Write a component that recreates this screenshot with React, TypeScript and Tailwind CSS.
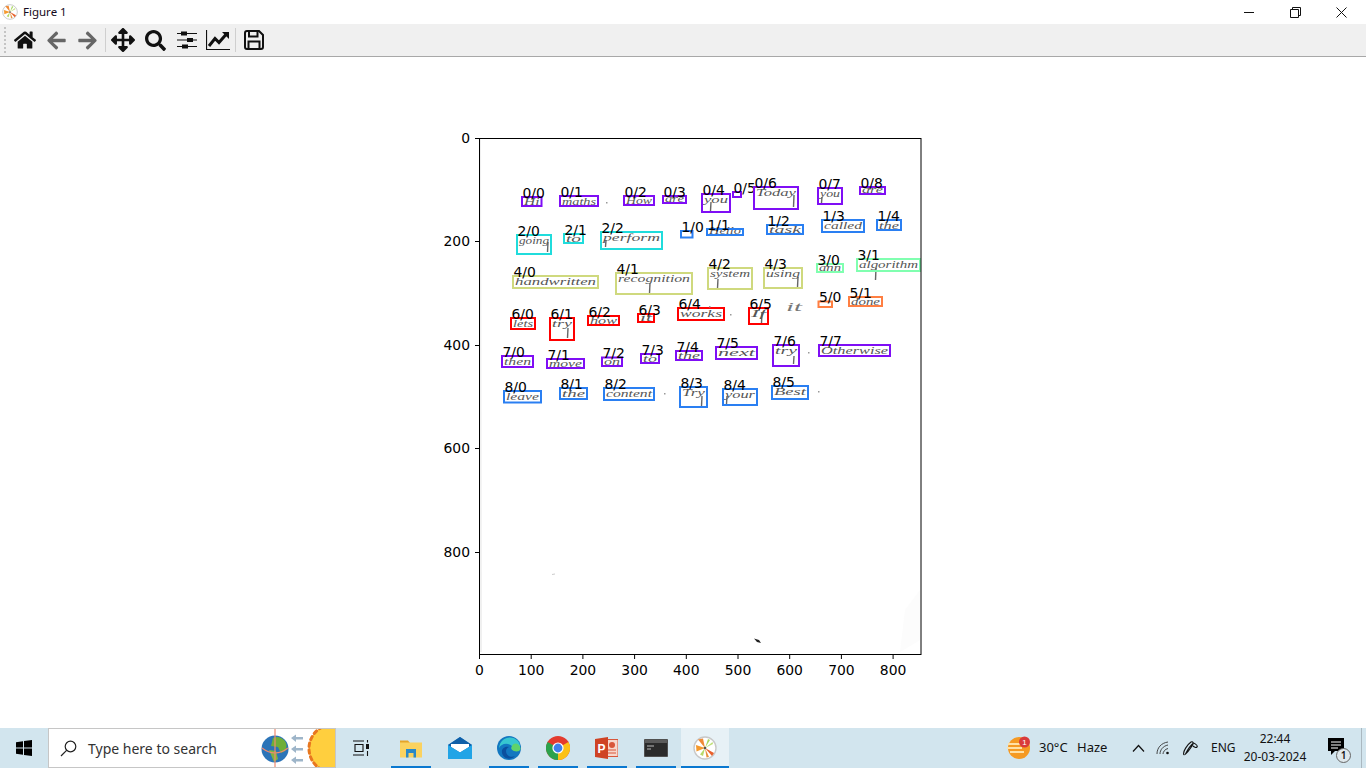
import type { ReactNode } from 'react'
import { FaArrowLeft, FaArrowRight, FaArrowsAlt, FaHome, FaSearch } from 'react-icons/fa'

const PURPLE = '#7f0ef5'
const BLUE = '#2a7ff2'
const CYAN = '#20dcdc'
const GREEN = '#80ffb0'
const KHAKI = '#cfd97e'
const ORANGE = '#ff7f42'
const RED = '#ff0000'

// label, x1, y1, x2, y2, colour, handwritten word
const rows: [string, number, number, number, number, string, string][] = [
  ['0/0', 522, 197, 541.5, 206, PURPLE, 'Hi'],
  ['0/1', 560, 196, 598, 206, PURPLE, 'maths'],
  ['0/2', 624, 196, 654, 205, PURPLE, 'How'],
  ['0/3', 663, 196, 686, 203, PURPLE, 'are'],
  ['0/4', 702, 194, 730, 212, PURPLE, 'you'],
  ['0/5', 733, 192, 741, 197, PURPLE, ''],
  ['0/6', 754, 187, 798, 209, PURPLE, 'Today'],
  ['0/7', 818, 188, 842, 204, PURPLE, 'you'],
  ['0/8', 860, 187, 885, 194, PURPLE, 'are'],
  ['1/0', 681, 231, 692.5, 237.5, BLUE, ''],
  ['1/1', 707, 229, 743, 235, BLUE, 'Hello'],
  ['1/2', 767, 225, 803, 234, BLUE, 'task'],
  ['1/3', 822, 220, 864, 232, BLUE, 'called'],
  ['1/4', 877, 220, 901, 230, BLUE, 'the'],
  ['2/0', 517, 235, 551, 254, CYAN, 'going'],
  ['2/1', 564, 234, 583, 243, CYAN, 'to'],
  ['2/2', 601, 232, 662, 249, CYAN, 'perform'],
  ['3/0', 817, 264, 843, 272, GREEN, 'ann'],
  ['3/1', 857, 259, 920, 271, GREEN, 'algorithm'],
  ['4/0', 513, 276, 598, 288, KHAKI, 'handwritten'],
  ['4/1', 616, 273, 692, 294, KHAKI, 'recognition'],
  ['4/2', 708, 268, 752, 289, KHAKI, 'system'],
  ['4/3', 764, 268, 802, 288, KHAKI, 'using'],
  ['5/0', 818.5, 301.5, 832, 307, ORANGE, ''],
  ['5/1', 849, 297, 882, 306, ORANGE, 'done'],
  ['6/0', 511, 318, 535, 329, RED, 'lets'],
  ['6/1', 550, 318, 574, 340, RED, 'try'],
  ['6/2', 588, 316, 619, 325, RED, 'how'],
  ['6/3', 638, 314, 654, 322, RED, 'it'],
  ['6/4', 678, 308, 724, 320, RED, 'works'],
  ['6/5', 749, 308, 768, 324, RED, 'If'],
  ['7/0', 502, 356, 533, 367, PURPLE, 'then'],
  ['7/1', 547, 359, 584, 368, PURPLE, 'move'],
  ['7/2', 602, 357.5, 622, 366, PURPLE, 'on'],
  ['7/3', 641, 354, 659, 363, PURPLE, 'to'],
  ['7/4', 676, 351, 702, 360, PURPLE, 'the'],
  ['7/5', 716, 347, 757, 359, PURPLE, 'next'],
  ['7/6', 773, 345, 799, 366, PURPLE, 'try'],
  ['7/7', 819, 345, 890, 356, PURPLE, 'Otherwise'],
  ['8/0', 504, 391, 541, 402.5, BLUE, 'leave'],
  ['8/1', 560, 388, 587, 399, BLUE, 'the'],
  ['8/2', 604, 388, 654, 400, BLUE, 'content'],
  ['8/3', 680, 387, 707, 407, BLUE, 'Try'],
  ['8/4', 723, 389, 757, 405, BLUE, 'your'],
  ['8/5', 772, 386, 808, 399, BLUE, 'Best'],
]

// pen tails below the words: x, y1, y2
const tails = [
  [711, 202, 211], [794, 195, 207], [822, 197, 203], [548, 242, 252], [606, 240, 247],
  [650, 283, 293], [718, 279, 288], [798, 277, 287], [568, 328, 338], [762, 312, 323],
  [794, 356, 364], [702, 396, 406], [727, 396, 404], [876, 268, 280],
]

const xTicks = [0, 100, 200, 300, 400, 500, 600, 700, 800]
const yTicks = [0, 200, 400, 600, 800]
const tickFont = '"DejaVu Sans", sans-serif'

function Plot() {
  return (
    <svg viewBox="0 57 1366 671" className="block h-full w-full">
      <path d="M480 139 L481 652" stroke="#f0f0f0" strokeWidth="2" fill="none" />
      <path d="M905 610 L920 590 L920 640 L900 652 Z" fill="#fcfcfc" />
      <path d="M754 638.5 L759 640 L761 643 L757 642 Z" fill="#222" />
      <path d="M552 574.5 L555 574" stroke="#ccc" strokeWidth="1" />
      {tails.map(([x, y1, y2]) => (
        <path key={x} d={`M${x} ${y1} L${x - 0.5} ${y2}`} stroke="#666" strokeWidth="1.4" />
      ))}
      {rows.map(([label, x1, y1, x2, y2, color, word]) => (
        <g key={label}>
          {word && (
            <text
              x={x1 + 2}
              y={y1 + Math.min(y2 - y1 - 1.5, 9)}
              textLength={x2 - x1 - 4}
              lengthAdjust="spacingAndGlyphs"
              fontFamily='"Liberation Serif", serif'
              fontStyle="italic"
              fontSize="11"
              fill="#555"
            >
              {word}
            </text>
          )}
          <rect x={x1} y={y1} width={x2 - x1} height={y2 - y1} fill="none" stroke={color} strokeWidth="2" />
          <text x={x1 + 0.5} y={y1 + 0.5} fontFamily={tickFont} fontSize="13.9" fill="#000">
            {label}
          </text>
        </g>
      ))}
      <text x="786" y="311" fontFamily='"Liberation Serif", serif' fontStyle="italic" fontSize="12" fill="#777" textLength="16" lengthAdjust="spacingAndGlyphs">
        it
      </text>
      {[[606, 202], [664, 393], [730, 314], [808, 352], [818, 391], [709, 306]].map(([x, y]) => (
        <rect key={x} x={x} y={y} width="1.5" height="1.5" fill="#999" />
      ))}
      <rect x="479.5" y="138.5" width="441.5" height="516" fill="none" stroke="#000" strokeWidth="1" />
      {xTicks.map((t) => {
        const x = 479.5 + t * 0.517
        return (
          <g key={t}>
            <path d={`M${x} 654.5 V659`} stroke="#000" />
            <text x={x} y="675" textAnchor="middle" fontFamily={tickFont} fontSize="13.9" fill="#000">
              {t}
            </text>
          </g>
        )
      })}
      {yTicks.map((t) => {
        const y = Math.round(138 + t * 0.517) + 0.5
        return (
          <g key={t}>
            <path d={`M479.5 ${y} H475`} stroke="#000" />
            <text x="470" y={y + 4} textAnchor="end" fontFamily={tickFont} fontSize="13.9" fill="#000">
              {t}
            </text>
          </g>
        )
      })}
    </svg>
  )
}

function MplLogo({ size }: { size: number }) {
  return (
    <svg width={size} height={size} viewBox="0 0 24 24" className="block">
      <circle cx="12" cy="12" r="11" fill="#fff" stroke="#c8c8c8" strokeWidth="1.4" />
      <path d="M12 12 L3 9 L3.5 15.5 Z" fill="#f59a2e" />
      <path d="M12 12 L5 3.5 L10 2.5 Z" fill="#f08a35" />
      <path d="M12 12 L15 3 L17 4 Z" fill="#a8d860" />
      <path d="M12 12 L20 8 L19.5 6 Z" fill="#bfe07a" />
      <path d="M12 12 L21 17 L19 20 Z" fill="#e8602c" />
      <path d="M12 12 L16 21 L13.5 21.5 Z" fill="#e8903c" />
      <path d="M12 12 L10 20 L7 18.5 Z" fill="#b8d96a" />
      <circle cx="12" cy="12" r="1.3" fill="#555" />
    </svg>
  )
}

function TitleBar() {
  return (
    <div className="flex h-6 shrink-0 items-center bg-white">
      <div className="ml-[2px] mr-[5px] flex w-4 justify-center">
        <MplLogo size={16} />
      </div>
      <span className="text-[11.5px] text-[#140a20]">Figure 1</span>
      <div className="ml-auto mr-[2px] flex h-full items-center">
        <div className="flex w-[46px] justify-center">
          <svg width="10" height="10" viewBox="0 0 10 10"><path d="M0 5.5 H10" stroke="#111" /></svg>
        </div>
        <div className="flex w-[46px] justify-center">
          <svg width="11" height="11" viewBox="0 0 11 11" fill="none" stroke="#111">
            <path d="M0.5 2.5 H8.5 V10.5 H0.5 Z M2.5 2.5 V0.5 H10.5 V8.5 H8.5" />
          </svg>
        </div>
        <div className="flex w-[46px] justify-center">
          <svg width="11" height="11" viewBox="0 0 11 11"><path d="M0.5 0.5 L10.5 10.5 M10.5 0.5 L0.5 10.5" stroke="#111" /></svg>
        </div>
      </div>
    </div>
  )
}

function Toolbar() {
  return (
    <div className="flex h-[33px] shrink-0 items-center border-b border-[#a8a8a8] bg-[#f0f0f0]">
      <div className="ml-[4px] h-[26px] w-[3px] border-l-2 border-dotted border-[#c4c4c4]" />
      <div className="ml-[2px] flex w-[32px] justify-center"><FaHome size={22} color="#111" /></div>
      <div className="flex w-[31px] justify-center"><FaArrowLeft size={21} color="#666" /></div>
      <div className="flex w-[31px] justify-center"><FaArrowRight size={21} color="#666" /></div>
      <div className="ml-[2px] h-[24px] w-px bg-[#cfcfcf]" />
      <div className="ml-[1px] flex w-[32px] justify-center"><FaArrowsAlt size={24} color="#111" /></div>
      <div className="flex w-[32px] justify-center"><FaSearch size={21} color="#111" /></div>
      <div className="flex w-[31px] justify-center">
        <svg width="20" height="18" viewBox="0 0 20 18" fill="#111">
          <path d="M0 2 H20 V3 H0 Z M0 8.5 H20 V9.5 H0 Z M0 15 H20 V16 H0 Z" />
          <rect x="4" y="0.5" width="6" height="4" />
          <rect x="10" y="7" width="6" height="4" />
          <rect x="5" y="13.5" width="6" height="4" />
        </svg>
      </div>
      <div className="flex w-[31px] justify-center">
        <svg width="24" height="20" viewBox="0 0 24 20" fill="none" stroke="#111">
          <path d="M0.5 0 V19.5 H24" strokeWidth="1.2" />
          <path d="M3 16 L9 8.5 L13 12.5 L20 4.5" strokeWidth="3" />
          <path d="M16 2 H23 V9 Z" fill="#111" stroke="none" />
        </svg>
      </div>
      <div className="ml-[2px] h-[24px] w-px bg-[#cfcfcf]" />
      <div className="ml-[1px] flex w-[33px] justify-center">
        <svg width="20" height="20" viewBox="0 0 20 20" fill="none" stroke="#111" strokeWidth="2">
          <path d="M1 3 Q1 1 3 1 H15 L19 5 V17 Q19 19 17 19 H3 Q1 19 1 17 Z" />
          <path d="M5 1.5 V6.5 H13.5 V1.5 M4.5 19 V11.5 H15.5 V19" />
        </svg>
      </div>
    </div>
  )
}

function SearchArt() {
  return (
    <svg width="76" height="39" viewBox="0 0 76 39" className="shrink-0">
      <circle cx="14" cy="20" r="13.5" fill="#2b74b8" />
      <path d="M12 9 Q18 6 24 12 Q27 17 24 22 L20 24 L17 18 L10 17 Z" fill="#6fae3a" />
      <path d="M8 21 L15 22 L17 30 L13 33 Z" fill="#7fb342" />
      <path d="M14 0 V39" stroke="#f08a70" strokeWidth="1.2" />
      <path d="M1 19 Q14 29 27 19" stroke="#f08a70" strokeWidth="1.2" fill="none" />
      <path d="M30 9 L35 5.5 V8 H42 V10.5 H35 V13 Z M30 20 L35 16.5 V19 H42 V21.5 H35 V24 Z M30 31 L35 27.5 V30 H42 V32.5 H35 V35 Z" fill="#9eb5c9" />
      <circle cx="72" cy="19.5" r="24" fill="#ffcf3e" stroke="#e8771f" strokeWidth="3" strokeLinecap="round" strokeDasharray="3.5 3.5" />
    </svg>
  )
}

function TaskButton({ children, running, current }: { children: ReactNode; running?: boolean; current?: boolean }) {
  return (
    <div className="relative flex h-full w-[49px] shrink-0 items-center justify-center">
      {current && <div className="absolute inset-y-0 left-[1px] w-[48px] bg-[#e7f1f6]" />}
      <div className="relative">{children}</div>
      {running && <div className={`absolute bottom-0 h-[2px] bg-[#0a78d0] ${current ? 'left-[1px] w-[48px]' : 'left-[5px] w-10'}`} />}
    </div>
  )
}

function Taskbar() {
  return (
    <div className="flex h-10 shrink-0 items-center bg-[#d2e5ee] text-[#111]">
      <div className="flex w-12 shrink-0 justify-center">
        <svg width="16" height="16" viewBox="0 0 16 16" fill="#000">
          <path d="M0 2.3 L7 1.2 V7.6 H0 Z M8 1 L16 0 V7.6 H8 Z M0 8.5 H7 V14.8 L0 13.7 Z M8 8.5 H16 V16 L8 14.9 Z" />
        </svg>
      </div>
      <div className="flex h-10 w-[288px] shrink-0 items-center overflow-hidden border border-[#c6c6c6] bg-white pl-[11px]">
        <svg width="17" height="17" viewBox="0 0 17 17" fill="none" stroke="#222" strokeWidth="1.2" className="shrink-0">
          <circle cx="10.5" cy="6.5" r="5.3" />
          <path d="M6.8 10.2 L1 16" />
        </svg>
        <span className="ml-[11px] w-[173px] shrink-0 text-[14px] whitespace-nowrap text-[#333]">Type here to search</span>
        <SearchArt />
      </div>
      <div className="flex w-[50px] shrink-0 justify-center">
        <svg width="16" height="16" viewBox="0 0 16 16" fill="none" stroke="#111" strokeWidth="1.1">
          <path d="M0 1 H11 M0 15 H11 M2 4.5 H10 V11.5 H2 Z" />
          <rect x="13" y="4" width="3" height="5" fill="#111" stroke="none" />
          <path d="M14.5 0 V2.5 M14.5 11 V16" />
        </svg>
      </div>
      <TaskButton running>
        <svg width="22" height="19" viewBox="0 0 22 19" className="block">
          <path d="M0 1.5 H8 L10 4 V8 H0 Z" fill="#e5a52a" />
          <rect y="3.5" width="22" height="15" fill="#fbd25f" />
          <path d="M6 10 H16 V18.5 H13.5 V14 H8.5 V18.5 H6 Z" fill="#2a89c8" />
        </svg>
      </TaskButton>
      <TaskButton>
        <svg width="24" height="22" viewBox="0 0 24 22" className="block">
          <path d="M0 8 L12 0 L24 8 V22 H0 Z" fill="#1a7fc9" />
          <path d="M0 8 L12 0 L24 8 L12 15 Z" fill="#0f5fa8" />
          <path d="M3 7 H21 V10 L12 15.5 L3 10 Z" fill="#fff" />
          <path d="M0 8 L12 15.5 L24 8 V22 H0 Z" fill="#21a4e6" />
        </svg>
      </TaskButton>
      <TaskButton running>
        <svg width="24" height="24" viewBox="0 0 24 24" className="block">
          <circle cx="12" cy="12" r="12" fill="#1277c0" />
          <path d="M2 12 C3 2 14 -2 21 5 C24 9 24 14 20 14 C17 15 13 14 15 10 C10 6 4 8 2 12 Z" fill="#37c6d0" />
          <path d="M15 10 C17 6 22 7 23.5 12 C24 15 20 16 17 15 C14 14 14 12 15 10 Z" fill="#5fd36a" />
          <path d="M9 15 C9 20 14 22 18 20 C14 24 7 24 5 17 C4 12 9 10 12 11 C10 12 9 13 9 15 Z" fill="#0b4f9e" />
        </svg>
      </TaskButton>
      <TaskButton running>
        <svg width="24" height="24" viewBox="0 0 24 24" className="block">
          <circle cx="12" cy="12" r="12" fill="#e33b2e" />
          <path d="M12 12 L22.4 6 A12 12 0 0 1 12 24 Z" fill="#fbc116" />
          <path d="M12 12 L12 24 A12 12 0 0 1 1.6 6 Z" fill="#2ba24c" />
          <circle cx="12" cy="12" r="5.6" fill="#fff" />
          <circle cx="12" cy="12" r="4.4" fill="#3f80ec" />
        </svg>
      </TaskButton>
      <TaskButton running>
        <svg width="23" height="22" viewBox="0 0 23 22" className="block">
          <rect x="9" y="2.5" width="14" height="17" fill="#f7d7cc" stroke="#d8563a" />
          <circle cx="17" cy="8" r="3" fill="#d8563a" />
          <path d="M12 13 H21 M12 16 H21" stroke="#d8563a" />
          <path d="M0 2 L13 0 V22 L0 20 Z" fill="#cf4324" />
          <text x="2.5" y="15.5" fontSize="12" fontWeight="700" fill="#fff" fontFamily='"Liberation Sans", sans-serif'>P</text>
        </svg>
      </TaskButton>
      <TaskButton running>
        <svg width="24" height="18" viewBox="0 0 24 18" className="block">
          <rect width="24" height="18" rx="1" fill="#2b2b2b" stroke="#777" />
          <rect x="1" y="1" width="22" height="3" fill="#5b5b5b" />
          <path d="M3 7 H10 M3 10 H7" stroke="#8a8a8a" strokeWidth="1.5" />
        </svg>
      </TaskButton>
      <TaskButton running current>
        <MplLogo size={24} />
      </TaskButton>
      <div className="ml-auto flex h-full items-center">
        <svg width="24" height="24" viewBox="0 0 24 24" className="shrink-0">
          <circle cx="12" cy="12" r="11" fill="#f59a23" />
          <path d="M1 8 H14 M0 12 H15 M3 16 H17" stroke="#ffe1a6" strokeWidth="1.8" />
          <circle cx="17.5" cy="6" r="5.5" fill="#d93a3a" />
          <text x="17.5" y="9" textAnchor="middle" fontSize="8" fill="#fff" fontFamily='"Liberation Sans", sans-serif'>1</text>
        </svg>
        <span className="ml-[8px] w-[38px] text-[13px]">30°C</span>
        <span className="w-[50px] text-[13px]">Haze</span>
        <svg width="13" height="8" viewBox="0 0 13 8" fill="none" stroke="#111" strokeWidth="1.2" className="ml-[5px] shrink-0">
          <path d="M1 7.5 L6.5 1.5 L12 7.5" />
        </svg>
        <svg width="14" height="14" viewBox="0 0 14 14" fill="none" stroke="#333" strokeWidth="0.9" className="ml-[11px] shrink-0">
          <path d="M1 13 C1 7 5 2 12 1 M4 13 C4 9 7 5 12 4 M7 13 C7 11 9 8 12 7.5" />
          <circle cx="11.5" cy="12" r="1.3" fill="#111" stroke="none" />
        </svg>
        <svg width="17" height="17" viewBox="0 0 17 17" fill="none" stroke="#111" strokeWidth="1.1" className="ml-[12px] shrink-0">
          <path d="M2 15 C0 12 6 4 9 2 C11 1 12 3 10 6 C8 9 5 13 3.5 14 C5 11 9 5 11.5 3 C14 4 16 6 15 7 C14 8 12 7 11 6" />
        </svg>
        <span className="ml-[12px] w-[32px] text-[12px]">ENG</span>
        <div className="flex w-[64px] flex-col items-center text-[12px] leading-[18px]">
          <span>22:44</span>
          <span>20-03-2024</span>
        </div>
        <div className="relative ml-[21px] flex h-full w-[28px] items-center">
          <svg width="17" height="17" viewBox="0 0 17 17" className="mb-[3px]">
            <path d="M0 0 H16 V13 H7 L3 17 V13 H0 Z" fill="#000" />
            <path d="M3 4 H13 M3 7 H13 M3 10 H10" stroke="#fff" />
          </svg>
          <span className="absolute top-[20px] left-[8px] flex h-[15px] w-[15px] items-center justify-center rounded-full border border-[#666] bg-[#dfe8ec] text-[10px] font-semibold">
            1
          </span>
        </div>
        <div className="ml-[5px] h-full w-px bg-[#aab8c0]" />
        <div className="w-[4px]" />
      </div>
    </div>
  )
}

export default function App() {
  return (
    <div className="flex h-screen w-screen flex-col overflow-hidden bg-white" style={{ fontFamily: '"Noto Sans", sans-serif' }}>
      <TitleBar />
      <Toolbar />
      <div className="min-h-0 flex-1">
        <Plot />
      </div>
      <Taskbar />
    </div>
  )
}
